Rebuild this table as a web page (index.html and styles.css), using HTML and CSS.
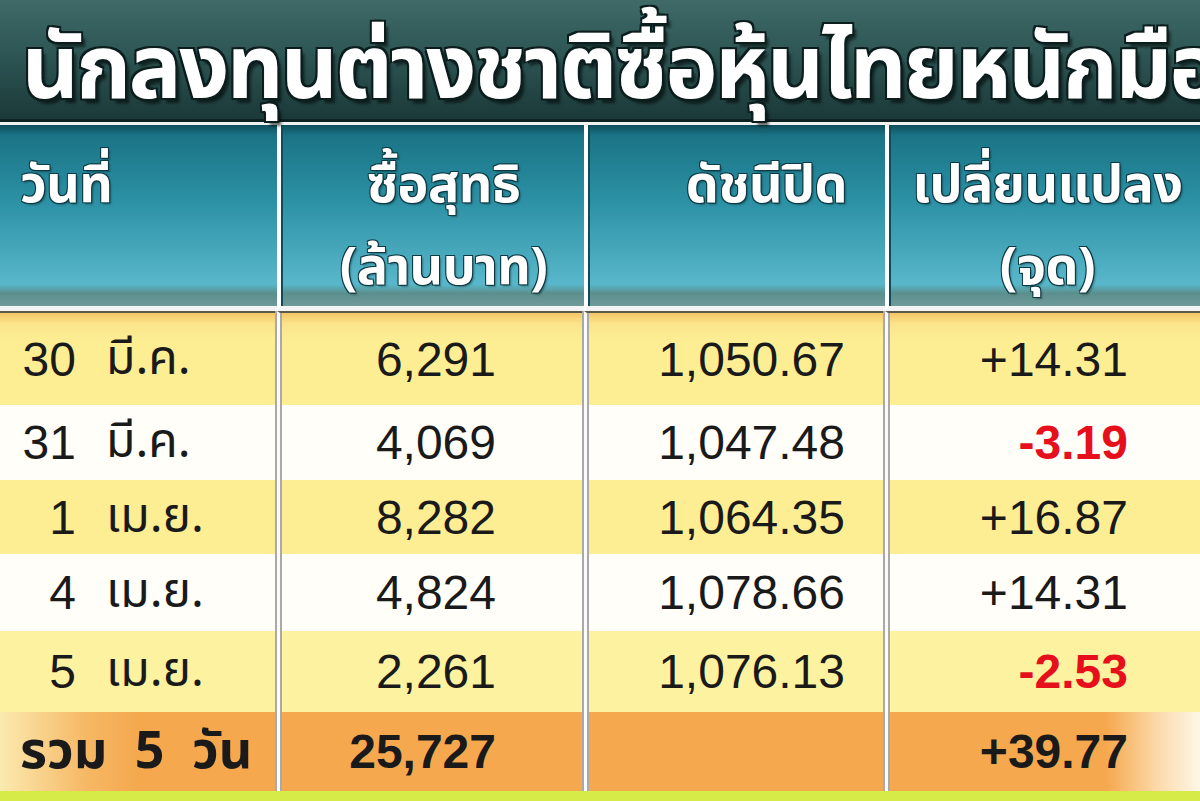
FILE: index.html
```html
<!DOCTYPE html>
<html lang="th">
<head>
<meta charset="utf-8">
<link rel="stylesheet" href="styles.css">
</head>
<body>
<div class="page">
  <div class="title-band">
    <h1 class="title">นักลงทุนต่างชาติซื้อหุ้นไทยหนักมือ</h1>
  </div>
  <div class="table">
    <div class="hd c1"><span class="hd-text">วันที่</span></div>
    <div class="hd c2"><span class="hd-text">ซื้อสุทธิ<br>(ล้านบาท)</span></div>
    <div class="hd c3"><span class="hd-text">ดัชนีปิด</span></div>
    <div class="hd c4"><span class="hd-text">เปลี่ยนแปลง<br>(จุด)</span></div>

    <div class="cell c1 r1 yel first"><span class="day">30</span><span class="mon">มี.ค.</span></div>
    <div class="cell c2 r1 yel first num">6,291</div>
    <div class="cell c3 r1 yel first num">1,050.67</div>
    <div class="cell c4 r1 yel first num">+14.31</div>

    <div class="cell c1 r2 wht"><span class="day">31</span><span class="mon">มี.ค.</span></div>
    <div class="cell c2 r2 wht num">4,069</div>
    <div class="cell c3 r2 wht num">1,047.48</div>
    <div class="cell c4 r2 wht num neg">-3.19</div>

    <div class="cell c1 r3 yel"><span class="day">1</span><span class="mon">เม.ย.</span></div>
    <div class="cell c2 r3 yel num">8,282</div>
    <div class="cell c3 r3 yel num">1,064.35</div>
    <div class="cell c4 r3 yel num">+16.87</div>

    <div class="cell c1 r4 wht"><span class="day">4</span><span class="mon">เม.ย.</span></div>
    <div class="cell c2 r4 wht num">4,824</div>
    <div class="cell c3 r4 wht num">1,078.66</div>
    <div class="cell c4 r4 wht num">+14.31</div>

    <div class="cell c1 r5 pale"><span class="day">5</span><span class="mon">เม.ย.</span></div>
    <div class="cell c2 r5 pale num">2,261</div>
    <div class="cell c3 r5 pale num">1,076.13</div>
    <div class="cell c4 r5 pale num neg">-2.53</div>

    <div class="cell c1 tot tot-first"><span class="tot-label">รวม 5 วัน</span></div>
    <div class="cell c2 tot num bold">25,727</div>
    <div class="cell c3 tot num"></div>
    <div class="cell c4 tot tot-last num bold">+39.77</div>
  </div>
  <div class="bottom-strip"></div>
</div>
</body>
</html>
```

FILE: styles.css
```css
html, body {
  margin: 0;
  padding: 0;
  overflow: hidden;
  background: #ffffff;
}

.page {
  width: 1200px;
  height: 801px;
  overflow: hidden;
  display: flex;
  flex-direction: column;
  font-family: "Liberation Sans", Arial, sans-serif;
}

.title-band {
  height: 122px;
  flex: none;
  background: linear-gradient(180deg, #3f6a68 0%, #2d5654 45%, #1b3939 100%);
  border-bottom: 3px solid #0e2222;
  position: relative;
  z-index: 2;
  box-sizing: border-box;
}

.title {
  margin: 0;
  padding: 28px 0 0 22px;
  font-family: "Noto Sans Thai", "Noto Sans", sans-serif;
  font-weight: 700;
  font-size: 88px;
  line-height: 88px;
  color: #ffffff;
  white-space: nowrap;
  letter-spacing: -2.5px;
  text-shadow:
    2px 2px 0 #0b1d1d, -2px -2px 0 #0b1d1d, 2px -2px 0 #0b1d1d, -2px 2px 0 #0b1d1d,
    4px 5px 3px rgba(0, 0, 0, 0.55);
}

.table {
  flex: none;
  display: grid;
  grid-template-columns: 277px 307px 301px 315px;
  grid-template-rows: 186px 94px 75px 74px 77px 81px 79px;
  border-top: 3px solid #f2f2f2;
}

.hd {
  background: linear-gradient(180deg, #0f4f5e 0%, #1a7486 6%, #2b8fa3 40%, #58b7cb 88%, #5b8f8d 93%, #6f9b9a 100%);
  border-bottom: 5px solid #f4f4f4;
  color: #ffffff;
  font-family: "Noto Sans Thai", "Noto Sans", sans-serif;
  font-weight: 700;
  font-size: 52px;
  line-height: 82px;
  box-sizing: border-box;
  padding-top: 20px;
  letter-spacing: -0.5px;
  text-shadow: 1px 1px 0 #0b3a44, -1px -1px 0 #0b3a44, 1px -1px 0 #0b3a44, -1px 1px 0 #0b3a44,
    2px 2px 2px rgba(0, 0, 0, 0.35);
}

.hd.c1 { padding-left: 20px; }
.hd.c2 { text-align: center; padding-left: 22px; border-left: 4px solid #ffffff; box-shadow: inset 2px 0 0 #0d4d5a; }
.hd.c3 { text-align: right; padding-right: 38px; border-left: 4px solid #ffffff; box-shadow: inset 2px 0 0 #0d4d5a; }
.hd.c4 { text-align: center; padding-left: 6px; border-left: 4px solid #ffffff; box-shadow: inset 2px 0 0 #0d4d5a; }

.cell {
  display: flex;
  align-items: center;
  box-sizing: border-box;
  font-size: 48px;
  color: #1a1a1a;
}

.cell.c2, .cell.c3, .cell.c4 {
  border-left: 3px solid #fbfbfb;
  box-shadow: inset 2px 0 0 #a9a9a9, -2px 0 0 #a9a9a9;
}

.num { justify-content: flex-end; }
.cell.c2 { padding-right: 88px; }
.cell.c3 { padding-right: 40px; }
.cell.c4 { padding-right: 72px; }

.yel { background: #fdee93; }
.wht { background: #fffef8; }
.pale { background: #fdf29f; }
.first {
  background: linear-gradient(180deg, #f6c766 0%, #fbe58c 12%, #fdee93 30%, #fdee93 100%);
  border-top: 2px solid #5a5a4a;
}

.neg { color: #e5101c; font-weight: 700; }
.bold { font-weight: 700; color: #1a1a1a; }

.day {
  width: 56px;
  text-align: right;
}
.mon {
  margin-left: 30px;
  font-family: "Noto Sans Thai", "Liberation Sans", sans-serif;
}
.c1 { padding-left: 20px; }

.tot { background: #f5a84e; }
.tot-first { background: linear-gradient(90deg, #fbeab0 0%, #f9d38e 14%, #f6b763 32%, #f5a84e 50%, #f5a84e 100%); }
.tot-last { background: linear-gradient(90deg, #f5a84e 0%, #f5a84e 70%, #fbd9a8 86%, #fff6e8 100%); }
.tot-label {
  font-family: "Noto Sans Thai", "Liberation Sans", sans-serif;
  font-weight: 700;
  font-size: 52px;
  word-spacing: 14px;
  white-space: pre;
}

.bottom-strip {
  flex: 1;
  background: #d6ea48;
}
```
